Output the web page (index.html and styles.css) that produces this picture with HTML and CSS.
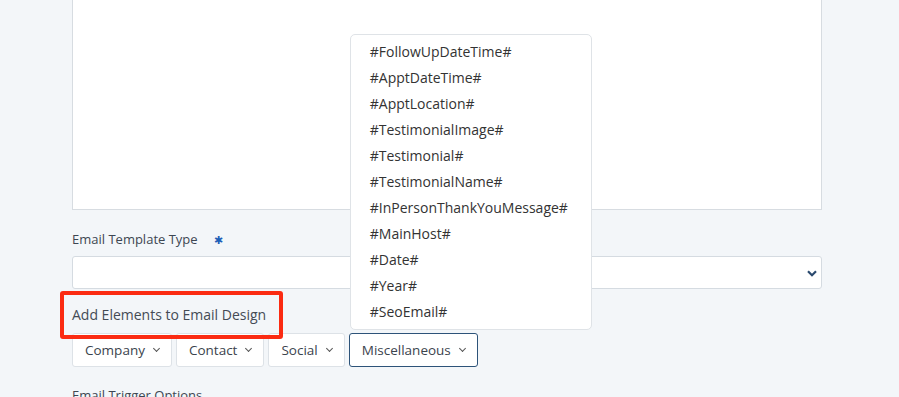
FILE: index.html
```html
<!DOCTYPE html>
<html lang="en">
<head>
    <meta charset="UTF-8">
    <meta name="viewport" content="width=device-width, initial-scale=1.0">
    <title>Email Template</title>
    <link rel="stylesheet" href="styles.css">
</head>
<body>
    <div class="container">
        <div class="editor-box"></div>

        <div class="form-group">
            <label class="field-label">Email Template Type <span class="required">&#10033;</span></label>
            <div class="select-box">
                <svg class="select-arrow" width="10" height="7" viewBox="0 0 10 7"><path d="M1 1.2 5 5.2 9 1.2" fill="none" stroke="#2b4a6e" stroke-width="2.2"/></svg>
            </div>
        </div>

        <div class="elements">
            <div class="elements-title">
                Add Elements to Email Design
                <div class="highlight"></div>
            </div>
            <div class="btn-row">
                <button class="drop-btn">Company <span class="chev"></span></button>
                <button class="drop-btn">Contact <span class="chev"></span></button>
                <button class="drop-btn">Social <span class="chev"></span></button>
                <div class="drop-wrap">
                    <button class="drop-btn active">Miscellaneous <span class="chev"></span></button>
                    <ul class="drop-menu">
                        <li>#FollowUpDateTime#</li>
                        <li>#ApptDateTime#</li>
                        <li>#ApptLocation#</li>
                        <li>#TestimonialImage#</li>
                        <li>#Testimonial#</li>
                        <li>#TestimonialName#</li>
                        <li>#InPersonThankYouMessage#</li>
                        <li>#MainHost#</li>
                        <li>#Date#</li>
                        <li>#Year#</li>
                        <li>#SeoEmail#</li>
                    </ul>
                </div>
            </div>
        </div>

        <div class="field-label trigger">Email Trigger Options</div>
    </div>
</body>
</html>
```

FILE: styles.css
```css
body {
    font-family: "Open Sans", Arial, sans-serif;
    background-color: #f3f6f9;
    margin: 0;
    padding: 0;
    overflow: hidden;
}

.container {
    width: 750px;
    margin-left: 72px;
}

.editor-box {
    height: 209px;
    background: #fff;
    border: 1px solid #d7dce1;
    border-top: none;
}

.form-group {
    margin-top: 19px;
}

.field-label {
    display: block;
    font-size: 13px;
    line-height: 20px;
    color: #3d4652;
}

.required {
    color: #1f5fb8;
    font-size: 11px;
    margin-left: 13px;
}

.select-box {
    position: relative;
    margin-top: 6px;
    height: 31px;
    background: #fff;
    border: 1px solid #d5dbe1;
    border-radius: 3px;
}

.select-arrow {
    position: absolute;
    right: 4px;
    top: 13px;
}

.elements {
    margin-top: 14px;
}

.elements-title {
    position: relative;
    display: inline-block;
    font-size: 14px;
    line-height: 20px;
    color: #444b55;
}

.highlight {
    position: absolute;
    left: -12px;
    top: -14px;
    width: 215px;
    height: 40px;
    border: 4px solid #fb2b12;
    border-radius: 3px;
}

.btn-row {
    display: flex;
    gap: 4px;
    margin-top: 8px;
}

.drop-btn {
    font-family: inherit;
    font-size: 13.5px;
    color: #3b434d;
    height: 34px;
    padding: 0 12px;
    background: #fff;
    border: 1px solid #dde2e7;
    border-radius: 3px;
    display: flex;
    align-items: center;
    gap: 9px;
}

.drop-btn.active {
    border-color: #2d5379;
}

.chev {
    width: 4px;
    height: 4px;
    border-right: 1px solid #555;
    border-bottom: 1px solid #555;
    transform: rotate(45deg);
    margin-top: -4px;
}

.drop-wrap {
    position: relative;
}

.drop-menu {
    position: absolute;
    left: 1px;
    bottom: calc(100% + 3px);
    width: 240px;
    margin: 0;
    padding: 4px 0;
    list-style: none;
    background: #fff;
    border: 1px solid #dfe3e7;
    border-radius: 5px;
}

.drop-menu li {
    font-size: 14px;
    line-height: 26px;
    padding-left: 19px;
    color: #333;
}

.trigger {
    margin-top: 18px;
}
```
